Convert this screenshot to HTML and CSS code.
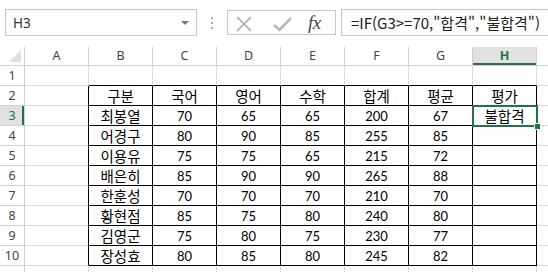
FILE: index.html
```html
<!DOCTYPE html>
<html lang="ko">
<head>
    <meta charset="UTF-8">
    <meta name="viewport" content="width=device-width, initial-scale=1.0">
    <title>평가 - 시트</title>
    <link rel="stylesheet" href="styles.css">
</head>
<body>
    <div class="toolbar">
        <div class="namebox">
            <span>H3</span>
            <span class="drop"></span>
        </div>
        <div class="grip"><i></i><i></i><i></i></div>
        <div class="fbtns">
            <svg class="icon" width="16" height="16" viewBox="0 0 16 16">
                <path d="M1 1 L15 15 M15 1 L1 15" stroke="#b9b9b9" stroke-width="2" fill="none"/>
            </svg>
            <svg class="icon" width="19" height="16" viewBox="0 0 19 16">
                <path d="M1 9 L6.5 14 L18 2" stroke="#b9b9b9" stroke-width="2.6" fill="none"/>
            </svg>
            <span class="fx">fx</span>
        </div>
        <div class="formula">=IF(G3&gt;=70,"합격","불합격")</div>
    </div>

    <table class="sheet">
        <colgroup>
            <col class="rh">
            <col class="c"><col class="c"><col class="c"><col class="c"><col class="c">
            <col class="c"><col class="c"><col class="c"><col class="c">
        </colgroup>
        <tr class="colhead">
            <th class="corner"><svg width="12" height="12" viewBox="0 0 12 12"><polygon points="12,0 12,12 0,12" fill="#dfdfdf"/></svg></th>
            <th>A</th><th>B</th><th>C</th><th>D</th><th>E</th><th>F</th><th>G</th><th class="on">H</th><th></th>
        </tr>
        <tr>
            <th>1</th><td></td>
            <td class="top"></td><td class="top"></td><td class="top"></td><td class="top"></td><td class="top"></td><td class="top"></td><td class="top"></td><td></td>
        </tr>
        <tr>
            <th>2</th><td class="lft"></td>
            <td class="box t">구분</td><td class="box t">국어</td><td class="box t">영어</td><td class="box t">수학</td><td class="box t">합계</td><td class="box t">평균</td><td class="box t">평가</td><td></td>
        </tr>
        <tr>
            <th class="on">3</th><td class="lft"></td>
            <td class="box t">최봉열</td><td class="box">70</td><td class="box">65</td><td class="box">65</td><td class="box">200</td><td class="box">67</td><td class="box t sel">불합격</td><td></td>
        </tr>
        <tr>
            <th>4</th><td class="lft"></td>
            <td class="box t">어경구</td><td class="box">80</td><td class="box">90</td><td class="box">85</td><td class="box">255</td><td class="box">85</td><td class="box"></td><td></td>
        </tr>
        <tr>
            <th>5</th><td class="lft"></td>
            <td class="box t">이용유</td><td class="box">75</td><td class="box">75</td><td class="box">65</td><td class="box">215</td><td class="box">72</td><td class="box"></td><td></td>
        </tr>
        <tr>
            <th>6</th><td class="lft"></td>
            <td class="box t">배은히</td><td class="box">85</td><td class="box">90</td><td class="box">90</td><td class="box">265</td><td class="box">88</td><td class="box"></td><td></td>
        </tr>
        <tr>
            <th>7</th><td class="lft"></td>
            <td class="box t">한훈성</td><td class="box">70</td><td class="box">70</td><td class="box">70</td><td class="box">210</td><td class="box">70</td><td class="box"></td><td></td>
        </tr>
        <tr>
            <th>8</th><td class="lft"></td>
            <td class="box t">황현점</td><td class="box">85</td><td class="box">75</td><td class="box">80</td><td class="box">240</td><td class="box">80</td><td class="box"></td><td></td>
        </tr>
        <tr>
            <th>9</th><td class="lft"></td>
            <td class="box t">김영군</td><td class="box">75</td><td class="box">80</td><td class="box">75</td><td class="box">230</td><td class="box">77</td><td class="box"></td><td></td>
        </tr>
        <tr>
            <th>10</th><td class="lft"></td>
            <td class="box t">장성효</td><td class="box">80</td><td class="box">85</td><td class="box">80</td><td class="box">245</td><td class="box">82</td><td class="box"></td><td></td>
        </tr>
        <tr>
            <th></th><td></td>
            <td></td><td></td><td></td><td></td><td></td><td></td><td></td><td></td>
        </tr>
    </table>
</body>
</html>
```

FILE: styles.css
```css
body {
    margin: 0;
    background-color: white;
    width: 548px;
    height: 272px;
    overflow: hidden;
    font-family: "Noto Sans", "Noto Sans CJK KR", sans-serif;
}

/* formula bar */
.toolbar {
    display: flex;
    align-items: center;
    height: 27px;
    padding: 9px 0 11px 5px;
}
.namebox {
    box-sizing: border-box;
    width: 192px;
    height: 27px;
    border: 1px solid #c6c6c6;
    display: flex;
    align-items: center;
    justify-content: space-between;
    padding: 0 7px 0 7px;
    font-size: 13.5px;
    color: #333;
}
.drop {
    width: 0;
    height: 0;
    border-left: 4px solid transparent;
    border-right: 4px solid transparent;
    border-top: 4px solid #777;
}
.grip {
    width: 30px;
    display: flex;
    flex-direction: column;
    align-items: center;
    gap: 3px;
}
.grip i {
    display: block;
    width: 2px;
    height: 2px;
    background-color: #a8a8a8;
}
.fbtns {
    box-sizing: border-box;
    width: 109px;
    height: 25px;
    border: 1px solid #c6c6c6;
    display: flex;
    align-items: center;
    padding: 0 0 0 8px;
}
.fbtns .icon {
    display: block;
    margin-top: 3px;
}
.fbtns .icon + .icon {
    margin-left: 21px;
}
.fx {
    margin-left: 16px;
    font-family: "Liberation Serif", serif;
    font-style: italic;
    font-size: 19px;
    color: #444;
    letter-spacing: -0.5px;
}
.formula {
    box-sizing: border-box;
    flex: 1;
    height: 27px;
    margin-left: 5px;
    margin-right: -3px;
    border: 1px solid #c6c6c6;
    padding-left: 9px;
    font-family: "Noto Sans CJK KR", sans-serif;
    font-size: 15px;
    line-height: 25px;
    color: #222;
    white-space: nowrap;
    overflow: hidden;
}

/* grid */
.sheet {
    border-collapse: separate;
    border-spacing: 0;
    table-layout: fixed;
    width: 601px;
}
.sheet col.rh {
    width: 25px;
}
.sheet col.c {
    width: 64px;
}
.sheet tr {
    height: 20px;
}
.sheet tr.colhead {
    height: 19px;
}
.sheet th,
.sheet td {
    padding: 0;
    border-right: 1px solid #dadada;
    border-bottom: 1px solid #dadada;
    text-align: center;
    vertical-align: middle;
    white-space: nowrap;
    line-height: 18px;
}
.sheet th {
    font-weight: normal;
    font-size: 12.5px;
    color: #444;
    border-color: #d0d0d0;
}
.sheet th.corner {
    text-align: right;
    vertical-align: bottom;
    padding: 0 3px 3px 0;
    line-height: 0;
}
.sheet th.on {
    background-color: #e1e1e1;
    color: #217346;
}
.colhead th.on {
    box-shadow: inset 0 -2px 0 #217346;
    font-weight: bold;
}
tr th.on:first-child {
    box-shadow: inset -2px 0 0 #217346;
}
.sheet td {
    font-family: Lato, sans-serif;
    font-size: 13px;
    color: #000;
}
.sheet td.t {
    font-family: "Noto Sans CJK KR", sans-serif;
    font-size: 14.5px;
}

/* black border around B2:H10 */
.sheet td.top {
    border-bottom-color: #000;
}
.sheet td.lft {
    border-right-color: #000;
}
.sheet td.box {
    border-right-color: #000;
    border-bottom-color: #000;
}

/* active cell */
.sheet td.sel {
    position: relative;
}
.sheet td.sel::after {
    content: '';
    position: absolute;
    left: -1px;
    top: -1px;
    right: -2px;
    bottom: -2px;
    border: 2px solid #217346;
}
.sheet td.sel::before {
    content: '';
    position: absolute;
    right: -5px;
    bottom: -5px;
    width: 5px;
    height: 5px;
    background-color: #217346;
    border: 1px solid white;
    z-index: 1;
}
```
